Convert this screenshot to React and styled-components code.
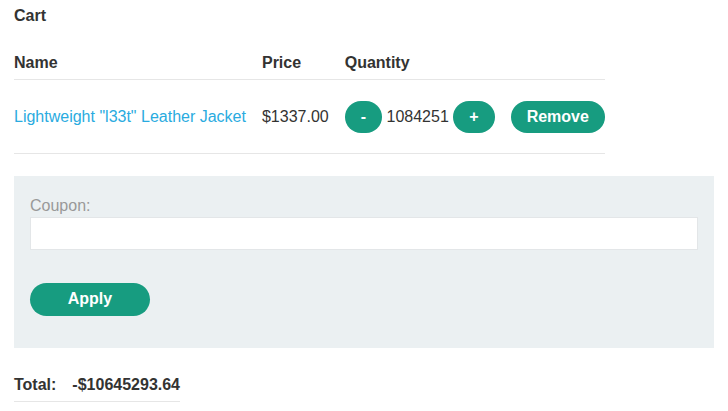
import React from "react";
import styled, { createGlobalStyle } from "styled-components";

const GlobalStyle = createGlobalStyle`
  html, body { margin: 0; padding: 0; background: #fff; }
  body {
    font-family: "Liberation Sans", Arial, sans-serif;
    font-size: 16px;
    color: #333332;
  }
  * { box-sizing: border-box; }
`;

const Page = styled.div`
  padding: 6px 14px 0 14px;
  width: 728px;
`;

const Title = styled.div`
  font-weight: bold;
  line-height: 20px;
  margin-bottom: 22px;
`;

const CartTable = styled.table`
  border-collapse: collapse;
  border-spacing: 0;
  margin-bottom: 22px;
`;

const HeadCell = styled.th`
  text-align: left;
  font-weight: bold;
  height: 31px;
  padding: 0 16px 0 0;
  vertical-align: middle;
  border-bottom: 1px solid #e6e6e6;
  &:last-child { padding-right: 0; }
`;

const Cell = styled.td`
  height: 74px;
  padding: 1px 16px 0 0;
  vertical-align: middle;
  border-bottom: 1px solid #e6e6e6;
  white-space: nowrap;
  &:last-child { padding-right: 0; }
`;

const ProductLink = styled.a`
  color: #29abe0;
  text-decoration: none;
`;

const Quantity = styled.div`
  display: flex;
  align-items: center;
  column-gap: 4.5px;
`;

const Button = styled.button`
  font-family: "Liberation Sans", Arial, sans-serif;
  font-size: 16px;
  font-weight: bold;
  color: #fff;
  background: #179c80;
  border: none;
  border-radius: 20px;
  height: ${(p) => (p.$tall ? "33px" : "32px")};
  min-width: ${(p) => p.$min || "0"};
  padding: 0 16px;
  line-height: 16px;
  cursor: pointer;
`;

const CouponPanel = styled.form`
  background: #ebf0f2;
  width: 700px;
  padding: 20px 16px 32px 16px;
  margin: 0 0 22px 0;
  display: flex;
  flex-direction: column;
  align-items: flex-start;
`;

const Label = styled.label`
  color: #999;
  line-height: 20px;
  margin-bottom: 1px;
`;

const Input = styled.input`
  width: 100%;
  height: 33px;
  background: #fff;
  border: 1px solid #e3e6e8;
  margin: 0 0 33px 0;
  font-size: 16px;
  font-family: inherit;
`;

const TotalTable = styled.table`
  border-collapse: collapse;
`;

const TotalCell = styled.td`
  font-weight: bold;
  height: 32px;
  padding: 0 16px 0 0;
  vertical-align: middle;
  border-bottom: 1px solid #e6e6e6;
  &:last-child { padding-right: 0; }
`;

export default function App() {
  return (
    <>
      <GlobalStyle />
      <Page>
        <Title>Cart</Title>
        <CartTable>
          <thead>
            <tr>
              <HeadCell>Name</HeadCell>
              <HeadCell>Price</HeadCell>
              <HeadCell>Quantity</HeadCell>
              <HeadCell></HeadCell>
            </tr>
          </thead>
          <tbody>
            <tr>
              <Cell>
                <ProductLink href="#">Lightweight "l33t" Leather Jacket</ProductLink>
              </Cell>
              <Cell>$1337.00</Cell>
              <Cell>
                <Quantity>
                  <Button type="button">-</Button>
                  <span>1084251</span>
                  <Button type="button">+</Button>
                </Quantity>
              </Cell>
              <Cell>
                <Button type="button">Remove</Button>
              </Cell>
            </tr>
          </tbody>
        </CartTable>
        <CouponPanel onSubmit={(e) => e.preventDefault()}>
          <Label htmlFor="coupon">Coupon:</Label>
          <Input id="coupon" type="text" />
          <Button type="submit" $tall $min="120px">Apply</Button>
        </CouponPanel>
        <TotalTable>
          <tbody>
            <tr>
              <TotalCell>Total:</TotalCell>
              <TotalCell>-$10645293.64</TotalCell>
            </tr>
          </tbody>
        </TotalTable>
      </Page>
    </>
  );
}
